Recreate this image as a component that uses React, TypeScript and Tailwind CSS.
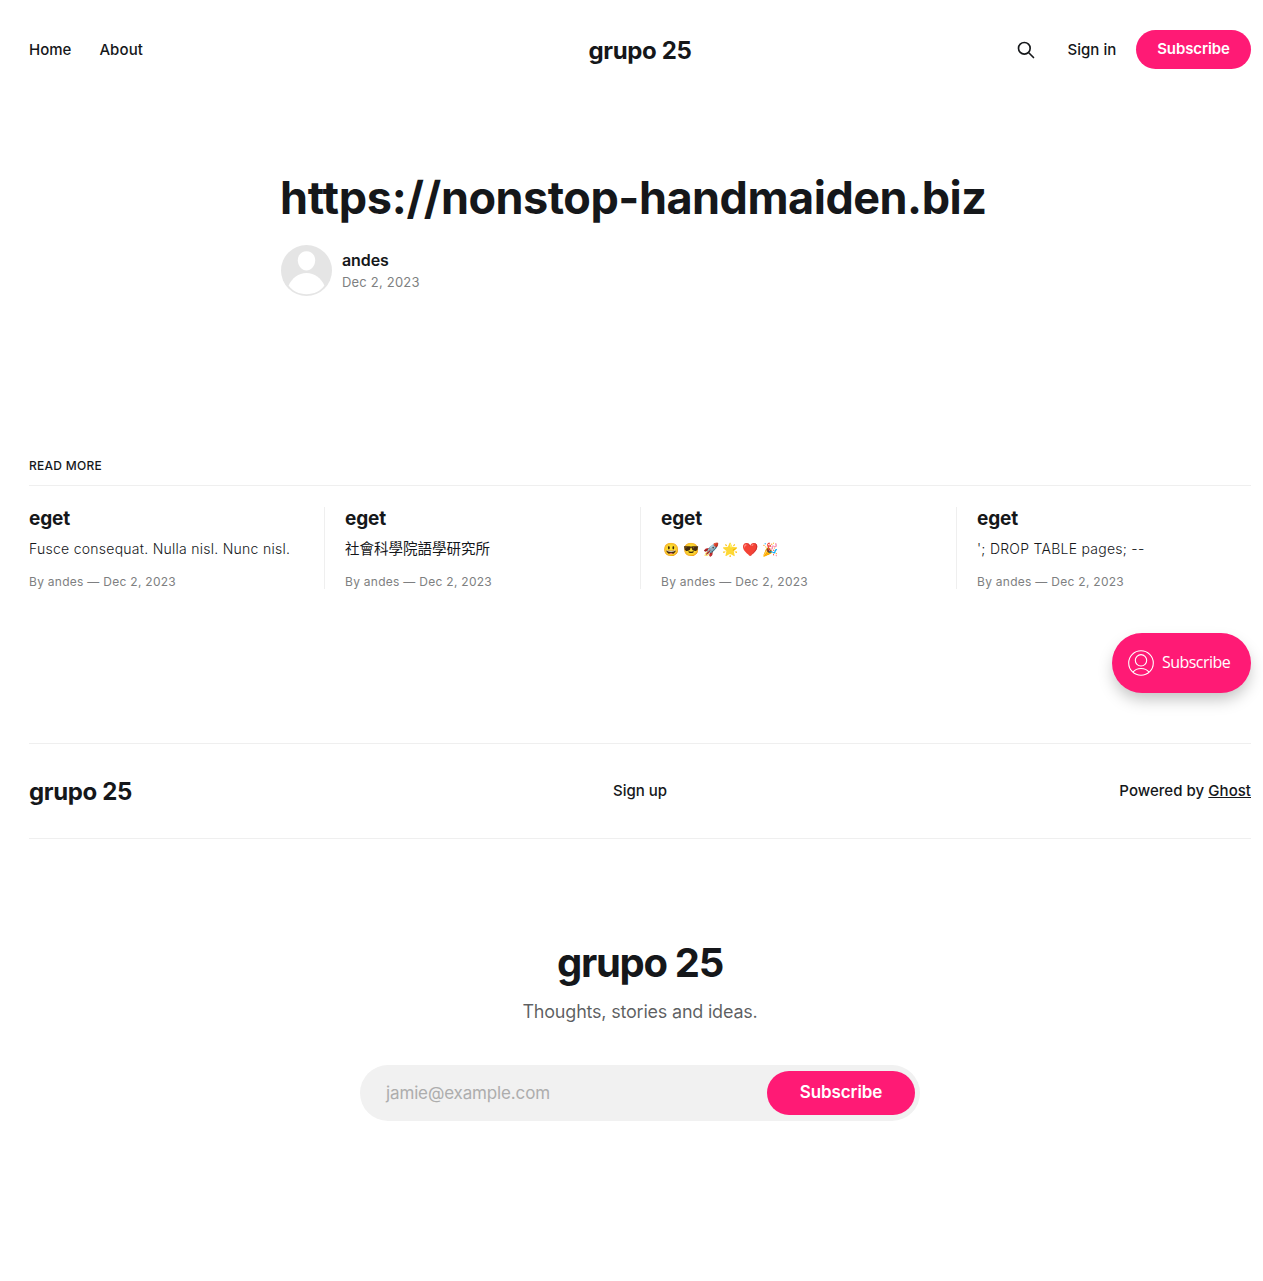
import type { ReactNode } from "react";

const posts: ReactNode[] = [
  "Fusce consequat. Nulla nisl. Nunc nisl.",
  <span key="cjk" className="text-[14.5px] font-normal tracking-normal">社會科學院語學研究所</span>,
  <Emojis key="emojis" />,
  "'; DROP TABLE pages; --",
];

function Emojis() {
  return (
    <span className="ml-[2px] flex gap-1 text-[13px] tracking-normal">
      {["😃", "😎", "🚀", "🌟", "❤️", "🎉"].map((e) => (
        <span key={e} className="flex w-[15.8px] justify-center">{e}</span>
      ))}
    </span>
  );
}

function SearchIcon() {
  return (
    <svg className="size-5" viewBox="0 0 24 24" fill="none" stroke="currentColor" strokeWidth="2" strokeLinecap="round" strokeLinejoin="round">
      <path d="M21 21l-6-6m2-5a7 7 0 11-14 0 7 7 0 0114 0z" />
    </svg>
  );
}

function Avatar() {
  return (
    <svg className="size-[51px]" viewBox="0 0 51 51">
      <circle cx="25.5" cy="25.5" r="25.5" fill="#e5e5e5" />
      <path d="M25.5 6.3c5 0 8.7 3.9 8.7 9 0 5.6-4.2 10.3-8.7 10.3s-8.7-4.7-8.7-10.3c0-5.1 3.7-9 8.7-9z" fill="#fff" />
      <path d="M7.6 40.5C11 33 17.5 28 25.5 28s14.5 5 17.9 12.5C39.5 46 33 49.2 25.5 49.2S11.5 46 7.6 40.5z" fill="#fff" />
    </svg>
  );
}

function MemberIcon() {
  return (
    <svg className="-mt-px size-[26px]" viewBox="0 0 26 26" fill="none" stroke="#fff" strokeWidth="1.1">
      <circle cx="13" cy="13" r="12.3" />
      <circle cx="13" cy="10.3" r="5.7" />
      <path d="M4.9 22.2c2-2.500 4.800-3.700 8.100-3.700s6.100 1.200 8.100 3.700" />
    </svg>
  );
}

export default function App() {
  return (
    <div className="relative h-[1281px] w-full overflow-hidden bg-white pl-[29px] font-['Inter','Noto_Sans_CJK_TC',sans-serif] text-[#15171a]">
      <div className="w-[1222px]">
        <header className="grid h-[100px] grid-cols-[1fr_auto_1fr] items-center text-[15px] font-medium">
          <nav className="flex gap-7">
            <a>Home</a>
            <a className="tracking-[0.1px]">About</a>
          </nav>
          <a className="pt-[2px] text-2xl font-bold tracking-[-0.36px]">grupo 25</a>
          <div className="flex items-center justify-end">
            <SearchIcon />
            <a className="ml-[31.3px]">Sign in</a>
            <a className="mb-px ml-[19.8px] flex h-[39px] w-[115px] items-center justify-center rounded-full bg-[#ff1a75] pb-px font-semibold tracking-[-0.1px] text-white">
              Subscribe
            </a>
          </div>
        </header>

        <article className="ml-[251px] h-[355px] w-[720px] pt-[70px]">
          <h1 className="text-[45px] leading-[55px] font-bold tracking-[-0.49px]">
            <span className="tracking-[-0.25px]">https://</span>nonstop-handmaiden.biz
          </h1>
          <div className="mt-[19px] ml-px flex gap-[10px]">
            <div className="pt-px"><Avatar /></div>
            <div className="pt-[5px]">
              <div className="text-base leading-[23px] font-semibold tracking-[-0.1px]">andes</div>
              <div className="text-[13px] leading-[21px] tracking-[0.2px] text-[#7e7f81]">Dec 2, 2023</div>
            </div>
          </div>
        </article>

        <section>
          <h3 className="flex h-[31px] items-start border-b border-[#efefef] text-xs leading-[22px] font-medium tracking-[0.28px]">READ MORE</h3>
          <div className="mt-[21px] grid grid-cols-[repeat(4,276px)] gap-x-10">
            {posts.map((text, i) => (
              <article key={i} className="relative h-[82px] whitespace-nowrap">
                {i > 0 && <i className="absolute top-0 -left-[21px] h-full w-px bg-[#efefef]" />}
                <h2 className="text-[19px] leading-[23px] font-bold tracking-[-0.1px]">eget</h2>
                <div className="mt-[9px] h-5 text-sm leading-5 font-light tracking-[0.26px]">{text}</div>
                <div className="mt-[14px] text-xs leading-[18px] tracking-[0.28px] text-[#7e7f81]">By andes — Dec 2, 2023</div>
              </article>
            ))}
          </div>
        </section>

        <footer className="mt-[154px]">
          <div className="grid h-[96px] grid-cols-[1fr_auto_1fr] items-center border-y border-[#efefef] text-[15px] font-medium">
            <a className="pt-[2px] text-2xl font-bold tracking-[-0.36px]">grupo 25</a>
            <a>Sign up</a>
            <div className="text-right tracking-[0.04px]">
              Powered by <a className="underline">Ghost</a>
            </div>
          </div>
          <div className="flex flex-col items-center pt-[100px]">
            <h2 className="text-[40px] leading-[48px] font-bold tracking-[-1.3px]">grupo 25</h2>
            <p className="mt-[11px] text-lg leading-[27px] tracking-[-0.21px] text-[#15171a]/70">Thoughts, stories and ideas.</p>
            <form className="mt-10 flex h-14 w-[560px] items-center justify-between rounded-full bg-[#f1f1f1] pr-[5px] pl-[26px]">
              <span className="pt-[2px] text-[17px] tracking-[-0.14px] text-[#adadad]">jamie@example.com</span>
              <span className="mb-px flex h-11 w-[148px] items-center justify-center rounded-full bg-[#ff1a75] text-[17px] font-semibold tracking-[-0.1px] text-white">
                Subscribe
              </span>
            </form>
          </div>
        </footer>
      </div>

      <div className="absolute top-[633px] left-[1112px] flex h-[60px] w-[139px] items-center gap-2 rounded-full bg-[#ff1a75] pl-4 font-['Open_Sans',sans-serif] text-base tracking-[-0.55px] text-white shadow-[0_8px_16px_-2px_rgba(0,0,0,0.25)]">
        <MemberIcon />
        <span className="pb-[2px]">Subscribe</span>
      </div>
    </div>
  );
}
